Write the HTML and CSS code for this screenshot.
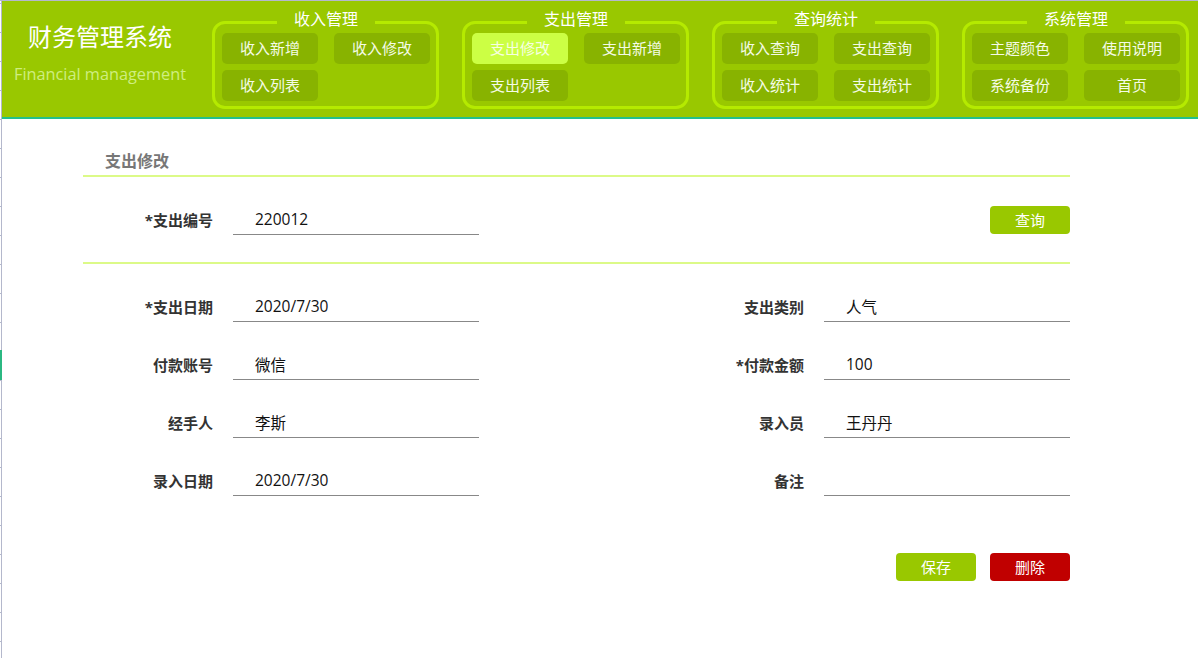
FILE: index.html
```html
<!DOCTYPE html>
<html lang="zh-CN">
<head>
<meta charset="utf-8">
<title>财务管理系统</title>
<link rel="stylesheet" href="styles.css">
</head>
<body>
<div class="page">
  <div class="rail"><span class="rail-mark"></span></div>
  <div class="main">
    <header class="topbar">
      <div class="brand">
        <div class="brand-title">财务管理系统</div>
        <div class="brand-sub">Financial management</div>
      </div>
      <nav class="groups">
        <fieldset class="group">
          <legend>收入管理</legend>
          <div class="group-grid">
            <a class="nav-btn">收入新增</a>
            <a class="nav-btn">收入修改</a>
            <a class="nav-btn">收入列表</a>
          </div>
        </fieldset>
        <fieldset class="group">
          <legend>支出管理</legend>
          <div class="group-grid">
            <a class="nav-btn active">支出修改</a>
            <a class="nav-btn">支出新增</a>
            <a class="nav-btn">支出列表</a>
          </div>
        </fieldset>
        <fieldset class="group">
          <legend>查询统计</legend>
          <div class="group-grid">
            <a class="nav-btn">收入查询</a>
            <a class="nav-btn">支出查询</a>
            <a class="nav-btn">收入统计</a>
            <a class="nav-btn">支出统计</a>
          </div>
        </fieldset>
        <fieldset class="group">
          <legend>系统管理</legend>
          <div class="group-grid">
            <a class="nav-btn">主题颜色</a>
            <a class="nav-btn">使用说明</a>
            <a class="nav-btn">系统备份</a>
            <a class="nav-btn">首页</a>
          </div>
        </fieldset>
      </nav>
    </header>

    <section class="content">
      <h2 class="content-title">支出修改</h2>

      <div class="form-grid query-row">
        <label class="lbl">*支出编号</label>
        <input class="field" type="text" value="220012">
        <button class="btn btn-green query-btn">查询</button>
      </div>

      <div class="form-grid fields">
        <label class="lbl">*支出日期</label>
        <input class="field" type="text" value="2020/7/30">
        <label class="lbl lbl-r">支出类别</label>
        <input class="field" type="text" value="人气">

        <label class="lbl">付款账号</label>
        <input class="field" type="text" value="微信">
        <label class="lbl lbl-r">*付款金额</label>
        <input class="field" type="text" value="100">

        <label class="lbl">经手人</label>
        <input class="field" type="text" value="李斯">
        <label class="lbl lbl-r">录入员</label>
        <input class="field" type="text" value="王丹丹">

        <label class="lbl">录入日期</label>
        <input class="field" type="text" value="2020/7/30">
        <label class="lbl lbl-r">备注</label>
        <input class="field" type="text" value="">
      </div>

      <div class="actions">
        <button class="btn btn-green">保存</button>
        <button class="btn btn-red">删除</button>
      </div>
    </section>
  </div>
</div>
</body>
</html>
```
FILE: styles.css
```css
* { box-sizing: border-box; }

html, body {
  margin: 0;
  padding: 0;
  background: #ffffff;
  font-family: "Open Sans", "Noto Sans CJK SC", sans-serif;
}

.page {
  display: flex;
  width: 1198px;
  height: 658px;
  overflow: hidden;
}

.rail {
  position: relative;
  width: 1px;
  flex: none;
  background-image: linear-gradient(to bottom, #b4b8cc 1px, transparent 1px);
  background-size: 1px 29px;
  background-position: 0 2px;
  background-repeat: repeat-y;
  border-top: 1px solid #b4b8cc;
}

.rail-mark {
  position: absolute;
  left: 0;
  top: 349px;
  width: 2px;
  height: 30px;
  background: #2bb882;
  z-index: 2;
}

.main {
  flex: 1;
  border-left: 1px solid #b4b8cc;
  border-top: 1px solid #b4b8cc;
  min-width: 0;
}

/* ---------- header ---------- */
.topbar {
  display: flex;
  align-items: flex-start;
  height: 118px;
  padding-top: 10px;
  background: #99c800;
  border-bottom: 2px solid #22c08c;
}

.brand {
  width: 196px;
  flex: none;
  text-align: center;
}

.brand-title {
  margin-top: 10px;
  font-size: 24px;
  line-height: 32px;
  color: #ffffff;
}

.brand-sub {
  margin-top: 10px;
  font-size: 16.3px;
  line-height: 22px;
  color: #cfee80;
}

.groups {
  display: flex;
  align-items: flex-start;
  gap: 23px;
  margin-left: 14px;
}

.group {
  width: 227px;
  margin: 0;
  padding: 0 6px 5px 7px;
  border: 3px solid #b5ea00;
  border-radius: 13px;
  min-width: 0;
}

.group legend {
  margin: 0 auto;
  padding: 0 17px 6px;
  font-size: 16px;
  line-height: 16px;
  color: #ffffff;
}

.group-grid {
  display: grid;
  grid-template-columns: 96px 96px;
  column-gap: 16px;
  row-gap: 6px;
}

.nav-btn {
  display: block;
  height: 31px;
  line-height: 31px;
  text-align: center;
  font-size: 15px;
  color: #f4fbe6;
  background: #88b300;
  border-radius: 5px;
}

.nav-btn.active {
  background: #ccff44;
  color: #f6ffe0;
}

/* ---------- content ---------- */
.content {
  width: 987px;
  margin-left: 81px;
}

.content-title {
  margin: 30px 0 0;
  padding: 0 0 2px 22px;
  font-size: 16px;
  line-height: 24px;
  font-weight: bold;
  color: #777777;
  border-bottom: 2px solid #dcfa88;
}

.form-grid {
  display: grid;
  grid-template-columns: 130px 246px 155px 130px 246px;
  column-gap: 20px;
  align-items: center;
}

.query-row {
  margin-top: 27px;
  padding-bottom: 27px;
  border-bottom: 2px solid #dcfa88;
}

.fields {
  margin-top: 27px;
  row-gap: 27px;
}

.lbl {
  text-align: right;
  font-size: 15px;
  line-height: 30px;
  font-weight: bold;
  color: #333333;
}

.lbl-r {
  grid-column: 4;
}

.field {
  display: block;
  width: 246px;
  height: 31px;
  margin: 0;
  padding: 0 0 0 22px;
  border: none;
  border-bottom: 1px solid #888888;
  outline: none;
  background: transparent;
  font: inherit;
  font-size: 15.5px;
  color: #111111;
}

.query-btn {
  grid-column: 5;
  justify-self: end;
}

.btn {
  width: 80px;
  height: 28px;
  padding: 0;
  border: none;
  border-radius: 4px;
  font-family: inherit;
  font-size: 15px;
  line-height: 28px;
  color: #ffffff;
  cursor: pointer;
}

.btn-green { background: #99c800; }
.btn-red { background: #c00000; }

.actions {
  display: flex;
  justify-content: flex-end;
  gap: 14px;
  margin-top: 57px;
}
```
